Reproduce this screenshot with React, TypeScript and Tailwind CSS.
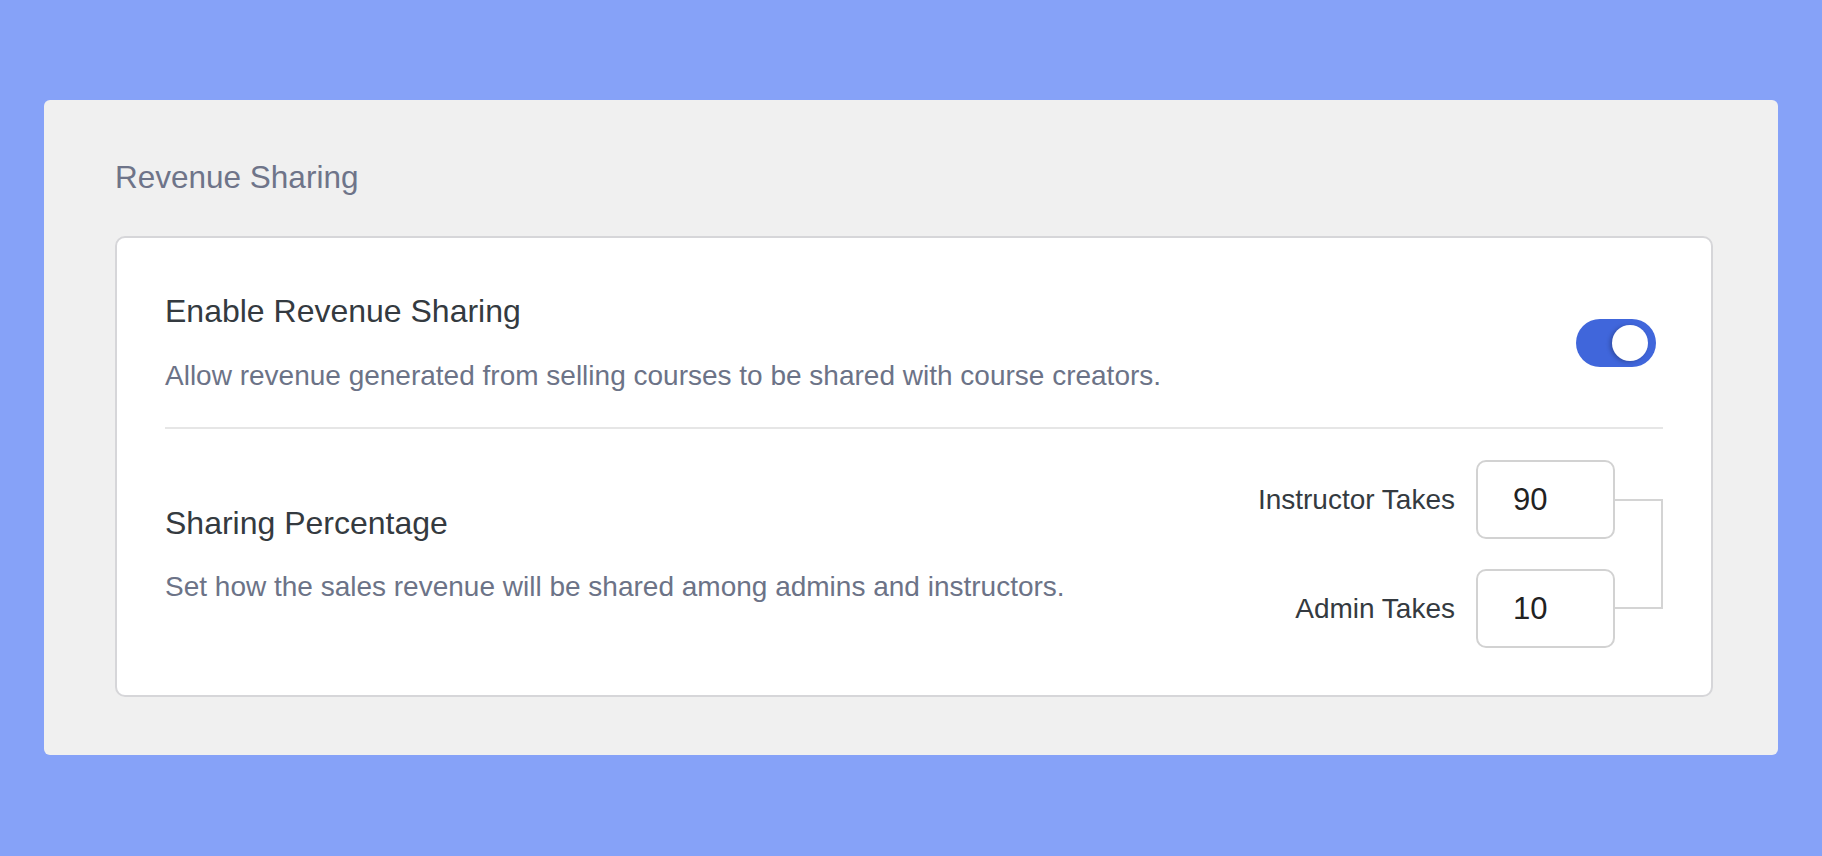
import { useState } from "react";

const font = { fontFamily: '"Liberation Sans", Arial, sans-serif' };

function Toggle({ on, onChange }: { on: boolean; onChange: (v: boolean) => void }) {
  return (
    <button
      type="button"
      role="switch"
      aria-checked={on}
      onClick={() => onChange(!on)}
      className={`mr-[7px] flex h-[48px] w-[80px] shrink-0 items-center rounded-full px-[6px] ${
        on ? "justify-end bg-[#4066db]" : "justify-start bg-[#d1d5db]"
      }`}
    >
      <span className="mr-[2px] block h-[36px] w-[36px] rounded-full bg-white shadow-[-2px_1px_4px_rgba(0,0,0,0.25)]" />
    </button>
  );
}

function ShareInput({ label, value }: { label: string; value: string }) {
  return (
    <div className="flex items-center justify-end gap-[21px]">
      <span className="text-[28px] leading-[32px] text-[#343a40]">{label}</span>
      <input
        defaultValue={value}
        className="h-[79px] w-[139px] rounded-[10px] border-2 border-[#d2d2d2] bg-white pl-[35px] text-[31px] text-[#222] outline-none"
      />
    </div>
  );
}

export default function App() {
  const [enabled, setEnabled] = useState(true);

  return (
    <main className="min-h-screen bg-[#86a2f8] px-[44px] pt-[100px]" style={font}>
      <section className="rounded-[6px] bg-[#f0f0f0] pb-[58px] pl-[71px] pr-[65px] pt-[57px]">
        <h1 className="text-[31.5px] leading-[40px] text-[#6e7489]">Revenue Sharing</h1>

        <div className="mt-[39px] rounded-[10px] border-2 border-[#d6d6d9] bg-white px-[48px]">
          <div className="flex items-center justify-between pb-[33px] pt-[53px]">
            <div>
              <h2 className="text-[32px] leading-[40px] text-[#343a40]">Enable Revenue Sharing</h2>
              <p className="mt-[27px] text-[28px] leading-[36px] text-[#6c7387]">
                Allow revenue generated from selling courses to be shared with course creators.
              </p>
            </div>
            <Toggle on={enabled} onChange={setEnabled} />
          </div>

          <div className="h-[2px] bg-[#e6e6e6]" />

          <div className="flex items-center justify-between pb-[47px] pt-[31px]">
            <div>
              <h2 className="text-[32px] leading-[40px] text-[#343a40]">Sharing Percentage</h2>
              <p className="mt-[26px] text-[28px] leading-[36px] text-[#6c7387]">
                Set how the sales revenue will be shared among admins and instructors.
              </p>
            </div>

            <div className="flex items-center">
              <div className="flex flex-col gap-[30px]">
                <ShareInput label="Instructor Takes" value="90" />
                <ShareInput label="Admin Takes" value="10" />
              </div>
              <div className="h-[110px] w-[48px] border-2 border-l-0 border-[#d4d4d4]" />
            </div>
          </div>
        </div>
      </section>
    </main>
  );
}
